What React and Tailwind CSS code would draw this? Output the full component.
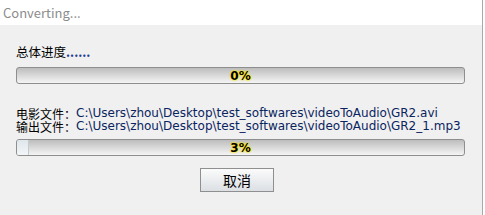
export default function App() {
  const cjk = { fontFamily: '"Noto Sans CJK SC", sans-serif' }
  const mono = { fontFamily: '"DejaVu Sans", sans-serif' }
  const bar = 'relative h-[17px] w-[449px] rounded-[3px] border border-[#8e8e8e] bg-gradient-to-b from-[#bdbdbd] to-[#f5f5f5] overflow-hidden'
  const pct = 'absolute inset-0 flex items-center justify-center text-[12px] font-bold text-black [text-shadow:0_0_1px_#ffe600,0_0_2px_#ffe600,0_0_2px_#ffe600,0_0_1px_#ffe600]'

  return (
    <div className="flex w-[485px] h-[215px] bg-white">
      <div className="flex flex-col w-[483px] h-full border-r border-[#a9a9a9]">
        <div className="h-[25px] bg-white pl-[3px] pt-[3px] text-[13px] text-[#8c8c8c]" style={cjk}>
          Converting...
        </div>

        <div className="flex-1 bg-[#f0f0f0] px-[16px] pt-[20px]">
          <div className="text-[12.5px] leading-[14px] text-black" style={cjk}>
            总体进度<span className="text-[#1c3f94] font-bold">......</span>
          </div>

          <div className={`${bar} mt-[8px]`} style={mono}>
            <div className={pct}>0%</div>
          </div>

          <div className="mt-[23px] text-[12px] leading-[13px]" style={cjk}>
            <div className="flex">
              <span className="text-black">电影文件：</span>
              <span className="text-[#0a2460]" style={mono}>C:\Users\zhou\Desktop\test_softwares\videoToAudio\GR2.avi</span>
            </div>
            <div className="flex">
              <span className="text-black">输出文件：</span>
              <span className="text-[#0a2460]" style={mono}>C:\Users\zhou\Desktop\test_softwares\videoToAudio\GR2_1.mp3</span>
            </div>
          </div>

          <div className={`${bar} mt-[6px]`} style={mono}>
            <div className="absolute left-0 top-0 h-full w-[12px] bg-gradient-to-b from-[#dfe6ec] to-[#f3f6f8] border-r border-[#c4c9cd]" />
            <div className={pct}>3%</div>
          </div>

          <div className="flex mt-[12px] pl-[184px]">
            <button
              className="w-[74px] h-[24px] border border-[#8f8f8f] bg-gradient-to-b from-[#fbfbfb] to-[#dce0e4] text-[14px] text-black"
              style={cjk}
            >
              取消
            </button>
          </div>
        </div>
      </div>
    </div>
  )
}
